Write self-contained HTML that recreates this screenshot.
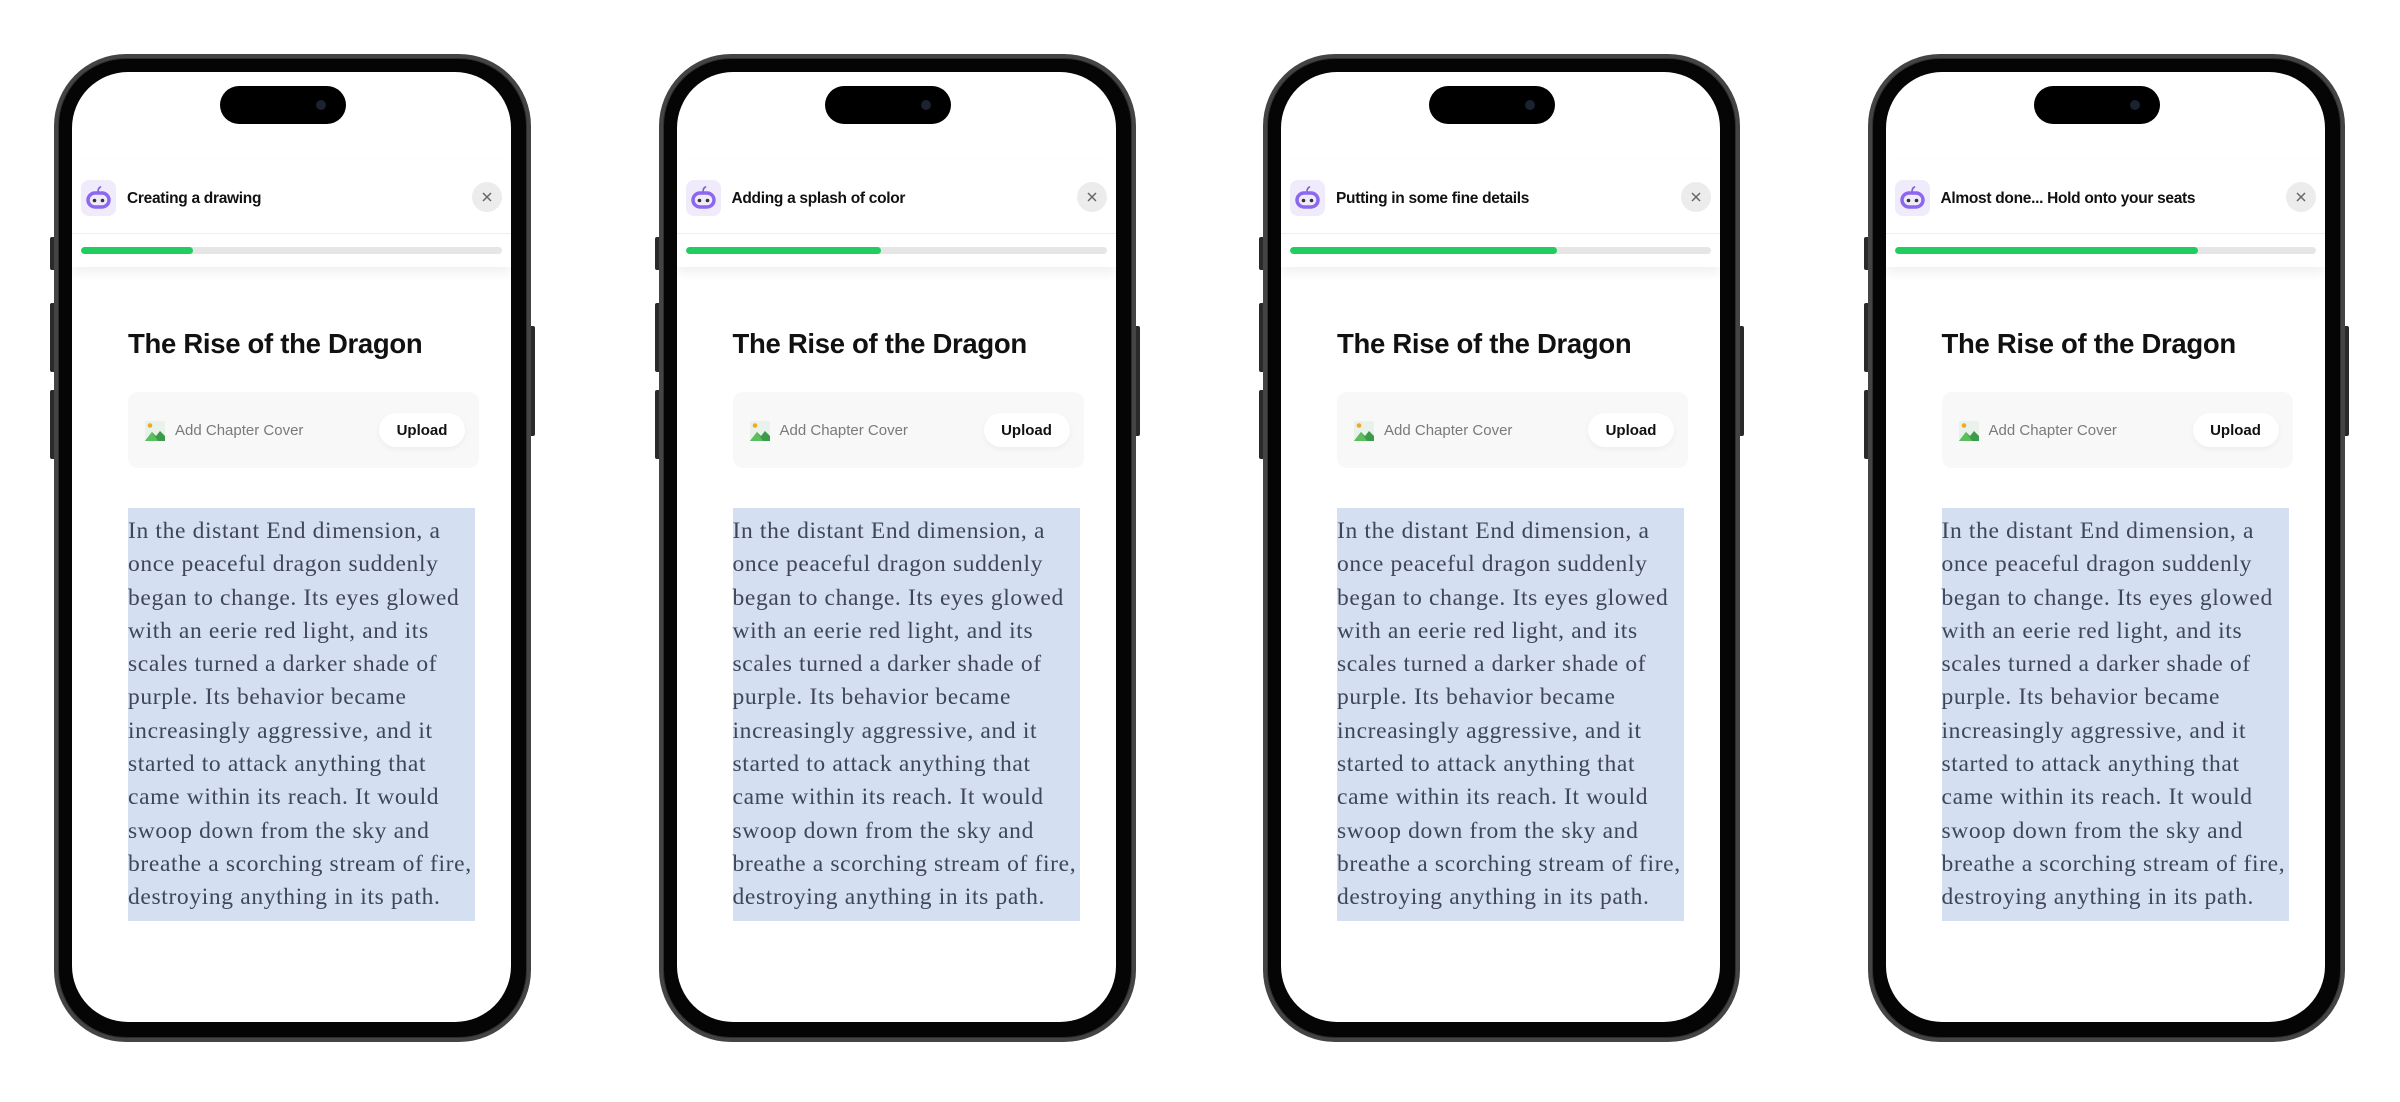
<!DOCTYPE html>
<html><head><meta charset="utf-8"><style>
*{margin:0;padding:0;box-sizing:border-box}
body{width:2400px;height:1102px;background:#fff;position:relative;overflow:hidden;font-family:"Liberation Sans",sans-serif}
.ph{position:absolute;top:54px;width:477px;height:988px}
.btn{position:absolute;background:#2a2a2a;border-radius:2px}
.outer{position:absolute;inset:0;border-radius:72px;background:#444}
.mid{position:absolute;inset:4px;border-radius:68px;background:#050505;border:1px solid #2e2e2e}
.scr{position:absolute;left:18px;top:18px;width:439px;height:950px;border-radius:56px;background:#fff;overflow:hidden}
.isl{position:absolute;left:148px;top:14px;width:126px;height:38px;border-radius:19px;background:#000}
.cam{position:absolute;left:96px;top:14px;width:10px;height:10px;border-radius:5px;background:#1b2230}
.hdr{position:absolute;left:0;top:88px;width:439px;height:107px;background:#fff;box-shadow:0 6px 10px rgba(0,0,0,0.06)}
.ico{position:absolute;left:9px;top:20px;width:35px;height:36px;border-radius:8px;background:#efebfb}
.ht{position:absolute;left:55px;top:29px;font-size:15.5px;font-weight:700;color:#111;letter-spacing:-0.3px;line-height:20px;white-space:nowrap}
.cls{position:absolute;left:400px;top:22px;width:30px;height:30px;border-radius:15px;background:#ececec}
.div{position:absolute;left:0;top:73px;width:439px;height:1px;background:#eee}
.bar{position:absolute;left:9px;top:87px;width:421px;height:7px;border-radius:4px;background:#e6e6e6;overflow:hidden}
.fill{height:100%;background:#22cc5e;border-radius:4px}
.ttl{position:absolute;left:56px;top:255px;font-size:27.5px;font-weight:700;color:#111;letter-spacing:-0.3px;line-height:34px;white-space:nowrap}
.card{position:absolute;left:56px;top:320px;width:351px;height:76px;border-radius:10px;background:#f8f8f8}
.cico{position:absolute;left:17px;top:29px}
.ct{position:absolute;left:47px;top:30px;font-size:15px;color:#7a7a7a;line-height:18px;white-space:nowrap}
.up{position:absolute;left:251px;top:21px;width:86px;height:34px;border-radius:17px;background:#fff;box-shadow:0 2px 6px rgba(0,0,0,0.05);font-size:15px;font-weight:700;color:#111;text-align:center;line-height:35px}
.txt{position:absolute;left:56px;top:436px;width:347px;height:413px;background:#d4dff2;padding-top:7px;font-family:"Liberation Serif",serif;font-size:23.5px;line-height:33.3px;color:#3f4658;white-space:nowrap;letter-spacing:0.65px}
</style></head><body>

<div class="ph" style="left:54px">
 <div class="btn" style="left:-4px;top:183px;width:6px;height:33px"></div>
 <div class="btn" style="left:-4px;top:249px;width:6px;height:69px"></div>
 <div class="btn" style="left:-4px;top:336px;width:6px;height:69px"></div>
 <div class="btn" style="left:475px;top:272px;width:6px;height:110px"></div>
 <div class="outer"></div><div class="mid"></div>
 <div class="scr">
  <div class="isl"><div class="cam"></div></div>
  <div class="hdr">
   <div class="ico"><svg width="35" height="36" viewBox="0 0 35 36"><path d="M17 12 Q17 8 19.5 7" stroke="#7b5be0" stroke-width="1.6" fill="none" stroke-linecap="round"/><rect x="7" y="13" width="21" height="14" rx="7" fill="none" stroke="#8c68ee" stroke-width="3.5"/><circle cx="13.5" cy="20.5" r="1.8" fill="#333"/><circle cx="21.5" cy="20.5" r="1.8" fill="#333"/></svg></div>
   <div class="ht">Creating a drawing</div>
   <div class="cls"><svg width="30" height="30"><path d="M11 11L19 19M19 11L11 19" stroke="#666" stroke-width="1.5"/></svg></div>
   <div class="div"></div>
   <div class="bar"><div class="fill" style="width:26.5%"></div></div>
  </div>
  <div class="ttl">The Rise of the Dragon</div>
  <div class="card">
   <svg class="cico" width="20" height="20" viewBox="0 0 20 20"><rect width="20" height="20" rx="2" fill="#e9f2ea"/><circle cx="5" cy="4.5" r="2.3" fill="#f5a623"/><path d="M0 20 L7 11 L11 15 L15 10 L20 15 L20 20Z" fill="#3c9b4b"/><path d="M0 20 L7 11 L13 20Z" fill="#5cbf5e"/></svg>
   <div class="ct">Add Chapter Cover</div>
   <div class="up">Upload</div>
  </div>
  <div class="txt">In the distant End dimension, a<br>once peaceful dragon suddenly<br>began to change. Its eyes glowed<br>with an eerie red light, and its<br>scales turned a darker shade of<br>purple. Its behavior became<br>increasingly aggressive, and it<br>started to attack anything that<br>came within its reach. It would<br>swoop down from the sky and<br>breathe a scorching stream of fire,<br>destroying anything in its path.</div>
 </div>
</div>

<div class="ph" style="left:658.5px">
 <div class="btn" style="left:-4px;top:183px;width:6px;height:33px"></div>
 <div class="btn" style="left:-4px;top:249px;width:6px;height:69px"></div>
 <div class="btn" style="left:-4px;top:336px;width:6px;height:69px"></div>
 <div class="btn" style="left:475px;top:272px;width:6px;height:110px"></div>
 <div class="outer"></div><div class="mid"></div>
 <div class="scr">
  <div class="isl"><div class="cam"></div></div>
  <div class="hdr">
   <div class="ico"><svg width="35" height="36" viewBox="0 0 35 36"><path d="M17 12 Q17 8 19.5 7" stroke="#7b5be0" stroke-width="1.6" fill="none" stroke-linecap="round"/><rect x="7" y="13" width="21" height="14" rx="7" fill="none" stroke="#8c68ee" stroke-width="3.5"/><circle cx="13.5" cy="20.5" r="1.8" fill="#333"/><circle cx="21.5" cy="20.5" r="1.8" fill="#333"/></svg></div>
   <div class="ht">Adding a splash of color</div>
   <div class="cls"><svg width="30" height="30"><path d="M11 11L19 19M19 11L11 19" stroke="#666" stroke-width="1.5"/></svg></div>
   <div class="div"></div>
   <div class="bar"><div class="fill" style="width:46.5%"></div></div>
  </div>
  <div class="ttl">The Rise of the Dragon</div>
  <div class="card">
   <svg class="cico" width="20" height="20" viewBox="0 0 20 20"><rect width="20" height="20" rx="2" fill="#e9f2ea"/><circle cx="5" cy="4.5" r="2.3" fill="#f5a623"/><path d="M0 20 L7 11 L11 15 L15 10 L20 15 L20 20Z" fill="#3c9b4b"/><path d="M0 20 L7 11 L13 20Z" fill="#5cbf5e"/></svg>
   <div class="ct">Add Chapter Cover</div>
   <div class="up">Upload</div>
  </div>
  <div class="txt">In the distant End dimension, a<br>once peaceful dragon suddenly<br>began to change. Its eyes glowed<br>with an eerie red light, and its<br>scales turned a darker shade of<br>purple. Its behavior became<br>increasingly aggressive, and it<br>started to attack anything that<br>came within its reach. It would<br>swoop down from the sky and<br>breathe a scorching stream of fire,<br>destroying anything in its path.</div>
 </div>
</div>

<div class="ph" style="left:1263px">
 <div class="btn" style="left:-4px;top:183px;width:6px;height:33px"></div>
 <div class="btn" style="left:-4px;top:249px;width:6px;height:69px"></div>
 <div class="btn" style="left:-4px;top:336px;width:6px;height:69px"></div>
 <div class="btn" style="left:475px;top:272px;width:6px;height:110px"></div>
 <div class="outer"></div><div class="mid"></div>
 <div class="scr">
  <div class="isl"><div class="cam"></div></div>
  <div class="hdr">
   <div class="ico"><svg width="35" height="36" viewBox="0 0 35 36"><path d="M17 12 Q17 8 19.5 7" stroke="#7b5be0" stroke-width="1.6" fill="none" stroke-linecap="round"/><rect x="7" y="13" width="21" height="14" rx="7" fill="none" stroke="#8c68ee" stroke-width="3.5"/><circle cx="13.5" cy="20.5" r="1.8" fill="#333"/><circle cx="21.5" cy="20.5" r="1.8" fill="#333"/></svg></div>
   <div class="ht">Putting in some fine details</div>
   <div class="cls"><svg width="30" height="30"><path d="M11 11L19 19M19 11L11 19" stroke="#666" stroke-width="1.5"/></svg></div>
   <div class="div"></div>
   <div class="bar"><div class="fill" style="width:63.5%"></div></div>
  </div>
  <div class="ttl">The Rise of the Dragon</div>
  <div class="card">
   <svg class="cico" width="20" height="20" viewBox="0 0 20 20"><rect width="20" height="20" rx="2" fill="#e9f2ea"/><circle cx="5" cy="4.5" r="2.3" fill="#f5a623"/><path d="M0 20 L7 11 L11 15 L15 10 L20 15 L20 20Z" fill="#3c9b4b"/><path d="M0 20 L7 11 L13 20Z" fill="#5cbf5e"/></svg>
   <div class="ct">Add Chapter Cover</div>
   <div class="up">Upload</div>
  </div>
  <div class="txt">In the distant End dimension, a<br>once peaceful dragon suddenly<br>began to change. Its eyes glowed<br>with an eerie red light, and its<br>scales turned a darker shade of<br>purple. Its behavior became<br>increasingly aggressive, and it<br>started to attack anything that<br>came within its reach. It would<br>swoop down from the sky and<br>breathe a scorching stream of fire,<br>destroying anything in its path.</div>
 </div>
</div>

<div class="ph" style="left:1867.5px">
 <div class="btn" style="left:-4px;top:183px;width:6px;height:33px"></div>
 <div class="btn" style="left:-4px;top:249px;width:6px;height:69px"></div>
 <div class="btn" style="left:-4px;top:336px;width:6px;height:69px"></div>
 <div class="btn" style="left:475px;top:272px;width:6px;height:110px"></div>
 <div class="outer"></div><div class="mid"></div>
 <div class="scr">
  <div class="isl"><div class="cam"></div></div>
  <div class="hdr">
   <div class="ico"><svg width="35" height="36" viewBox="0 0 35 36"><path d="M17 12 Q17 8 19.5 7" stroke="#7b5be0" stroke-width="1.6" fill="none" stroke-linecap="round"/><rect x="7" y="13" width="21" height="14" rx="7" fill="none" stroke="#8c68ee" stroke-width="3.5"/><circle cx="13.5" cy="20.5" r="1.8" fill="#333"/><circle cx="21.5" cy="20.5" r="1.8" fill="#333"/></svg></div>
   <div class="ht">Almost done... Hold onto your seats</div>
   <div class="cls"><svg width="30" height="30"><path d="M11 11L19 19M19 11L11 19" stroke="#666" stroke-width="1.5"/></svg></div>
   <div class="div"></div>
   <div class="bar"><div class="fill" style="width:72%"></div></div>
  </div>
  <div class="ttl">The Rise of the Dragon</div>
  <div class="card">
   <svg class="cico" width="20" height="20" viewBox="0 0 20 20"><rect width="20" height="20" rx="2" fill="#e9f2ea"/><circle cx="5" cy="4.5" r="2.3" fill="#f5a623"/><path d="M0 20 L7 11 L11 15 L15 10 L20 15 L20 20Z" fill="#3c9b4b"/><path d="M0 20 L7 11 L13 20Z" fill="#5cbf5e"/></svg>
   <div class="ct">Add Chapter Cover</div>
   <div class="up">Upload</div>
  </div>
  <div class="txt">In the distant End dimension, a<br>once peaceful dragon suddenly<br>began to change. Its eyes glowed<br>with an eerie red light, and its<br>scales turned a darker shade of<br>purple. Its behavior became<br>increasingly aggressive, and it<br>started to attack anything that<br>came within its reach. It would<br>swoop down from the sky and<br>breathe a scorching stream of fire,<br>destroying anything in its path.</div>
 </div>
</div>
</body></html>
